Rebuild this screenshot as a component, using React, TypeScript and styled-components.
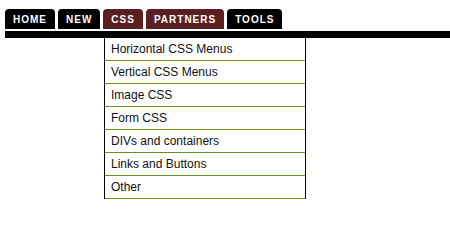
import React from 'react';
import styled, {createGlobalStyle} from 'styled-components';

const Global = createGlobalStyle`
	body{
		margin:0;
		background:#fff;
		font-family:"Liberation Sans", Arial, sans-serif;
	}
	ul{
		list-style:none;
		margin:0;
		padding:0;
	}
`;

const Page = styled.div`
	padding:9px 0 0 5px;
`;

const TabList = styled.ul`
	display:flex;
	gap:3px;
`;

const Tab = styled.li<{$active?: boolean}>`
	height:20px;
	display:flex;
	align-items:center;
	padding:1px 8px 0 8px;
	box-sizing:border-box;
	border-radius:4px 4px 0 0;
	background:${p => p.$active ? '#5a1f20' : '#000'};
	color:#fff;
	font-family:"Liberation Sans", Arial, sans-serif;
	font-weight:bold;
	font-size:10px;
	letter-spacing:1px;
`;

const Bar = styled.div`
	height:7px;
	margin-top:2px;
	background:#000;
`;

const Menu = styled.ul`
	width:200px;
	margin-left:99px;
	border-left:1px solid #000;
	border-right:1px solid #000;
	> li{
		height:22px;
		line-height:23px;
		padding-left:6px;
		border-bottom:1px solid #6b8e23;
		font-size:12px;
		color:#111;
	}
`;

const tabs = [
	{label:'HOME'},
	{label:'NEW'},
	{label:'CSS', active:true},
	{label:'PARTNERS', active:true},
	{label:'TOOLS'},
];

const items = [
	'Horizontal CSS Menus',
	'Vertical CSS Menus',
	'Image CSS',
	'Form CSS',
	'DIVs and containers',
	'Links and Buttons',
	'Other',
];

function App() {
	return (
		<Page>
			<Global/>
			<TabList>
				{tabs.map(t =>
					<Tab key={t.label} $active={t.active}>{t.label}</Tab>
				)}
			</TabList>
			<Bar/>
			<Menu>
				{items.map(i => <li key={i}>{i}</li>)}
			</Menu>
		</Page>
	);
}

export default App;
